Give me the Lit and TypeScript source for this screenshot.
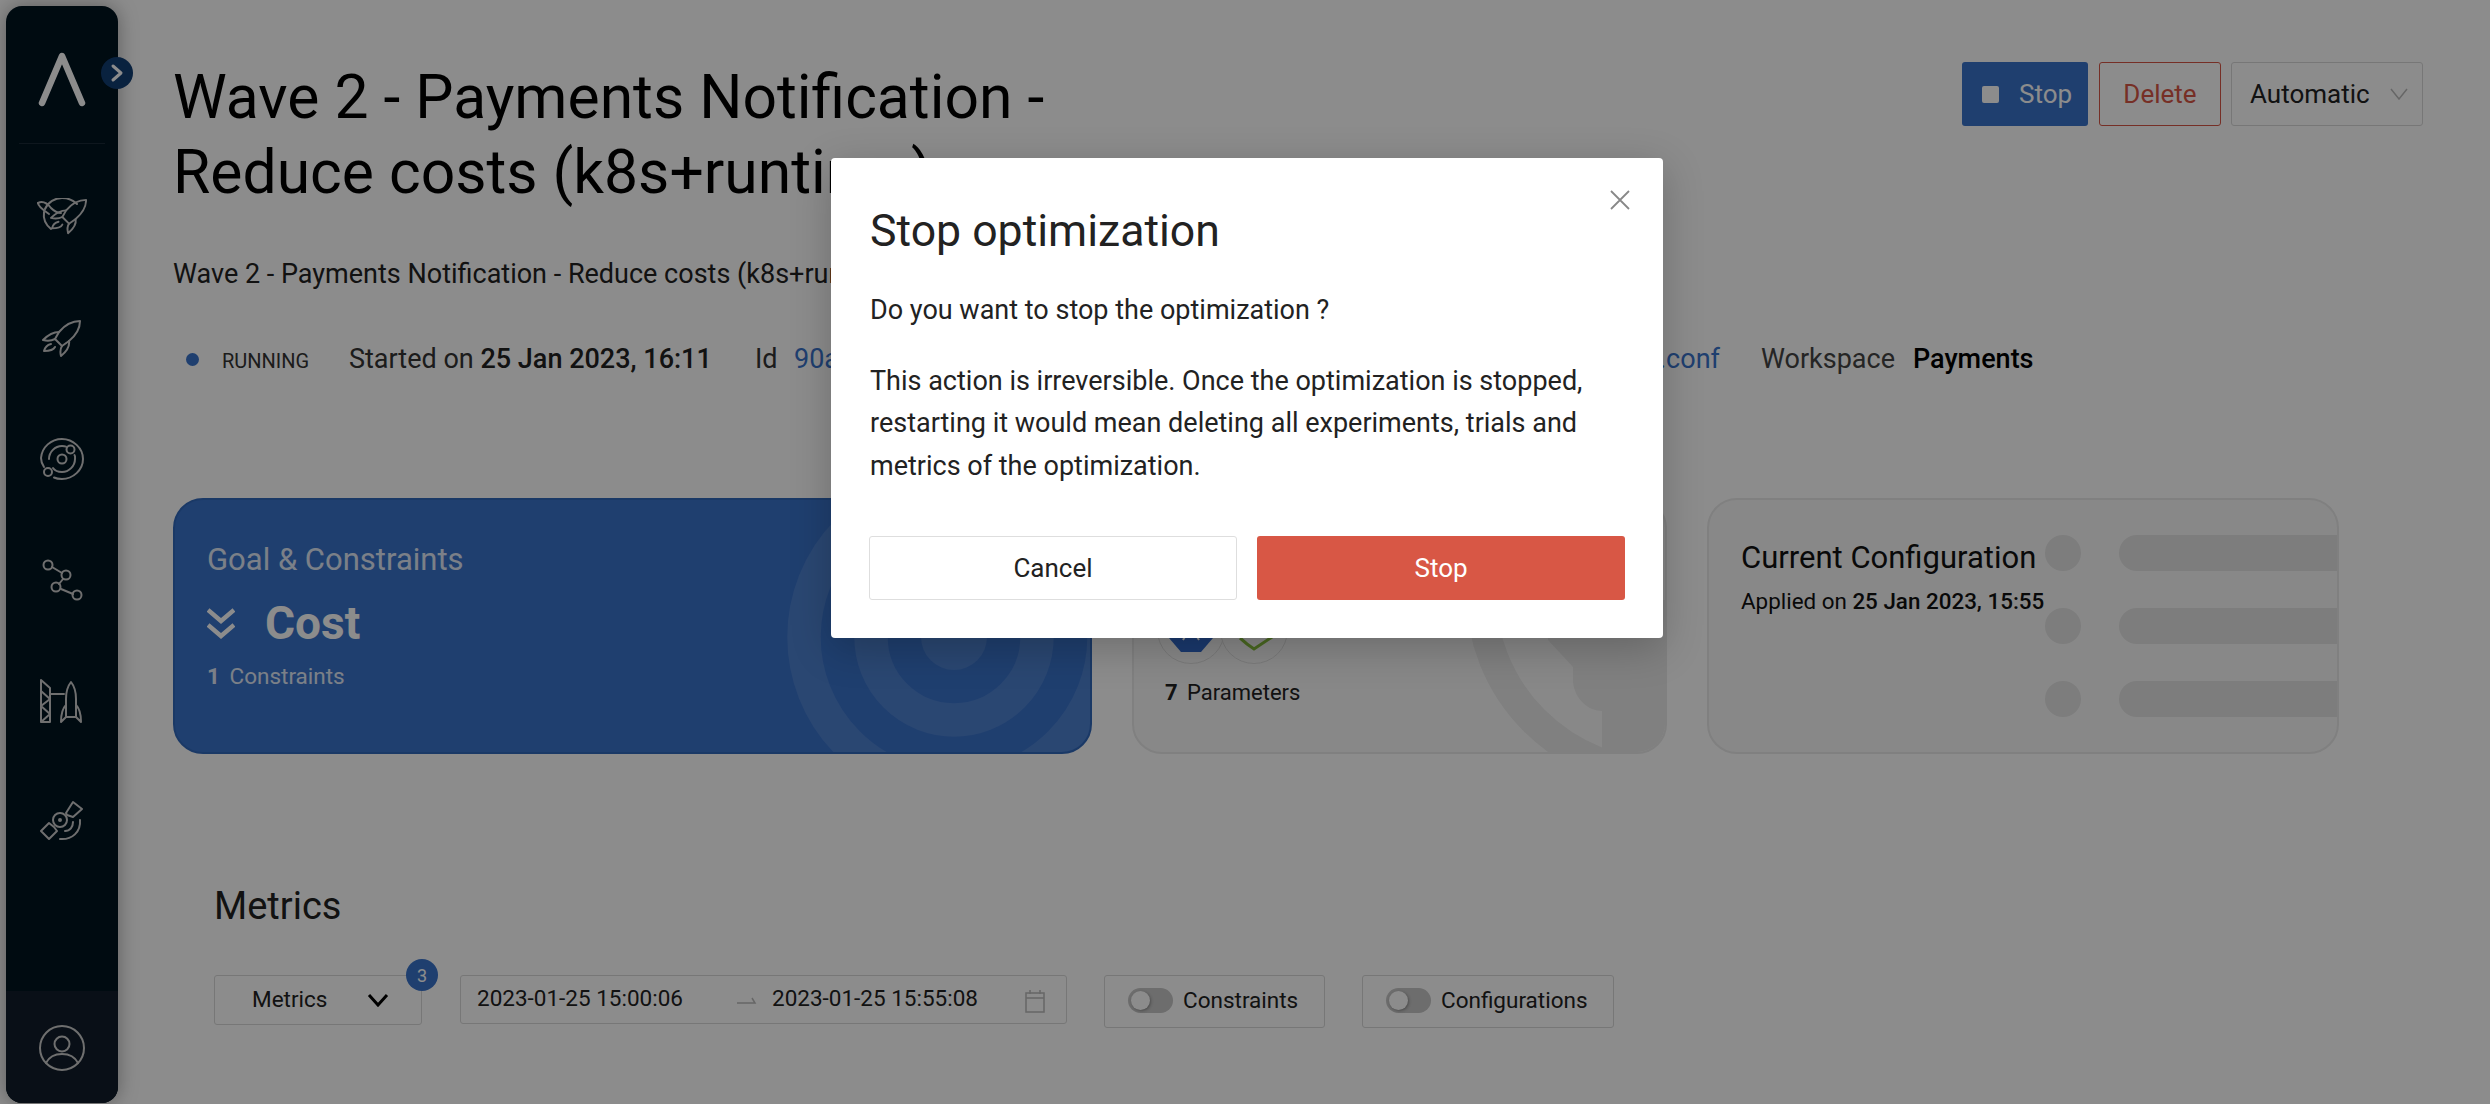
import { LitElement, html, css, svg } from "lit";
import { customElement } from "lit/decorators.js";

const rocket = svg`<path d="M38 2C30 2 22 7 17 13L13 20L20 27L27 22C33 17 38 10 38 2Z"/><path d="M17 13C10 13 5 17 1 21C5 22 9 22 13 20"/><path d="M27 22C28 28 24 33 19 37C18 33 18 30 20 27"/><path d="M9 25C5 26 3 28 2 32C6 32 11 32 13 28"/>`;

@customElement("app-root")
export class AppRoot extends LitElement {
  static styles = css`
    :host { display: block; width: 2490px; height: 1104px; overflow: hidden; position: relative; background: #fff; font-family: Roboto, "Liberation Sans", sans-serif; color: #222; }
    * { box-sizing: border-box; }
    .page { display: flex; height: 1104px; padding: 6px 0 1px 6px; }
    .side { width: 112px; flex: none; background: #001420; border-radius: 16px; display: flex; flex-direction: column; position: relative; box-shadow: 0 0 20px rgba(0,0,0,.35); }
    .logo { height: 138px; margin: 0 13px; border-bottom: 1px solid #1a2a38; display: flex; justify-content: center; padding-top: 45px; }
    .toggle { position: absolute; left: 95px; top: 51px; width: 32px; height: 32px; border-radius: 50%; background: #123e74; display: flex; align-items: center; justify-content: center; }
    .nav { flex: 1; padding-top: 12px; display: flex; flex-direction: column; }
    .item { height: 121px; display: flex; align-items: center; justify-content: center; }
    .item svg, .user svg { fill: none; stroke: #cacaca; stroke-width: 2; stroke-linecap: round; stroke-linejoin: round; }
    .user { height: 112px; background: #111d2a; border-radius: 0 0 16px 16px; display: flex; align-items: center; justify-content: center; padding-top: 2px; }

    .main { flex: 1; padding: 54px 67px 0 55px; min-width: 0; }
    .top { display: flex; justify-content: space-between; align-items: flex-start; }
    h1 { margin: 0; width: 920px; font-size: 60.6px; line-height: 75px; font-weight: 400; color: #000; }
    .actions { display: flex; margin-top: 2px; }
    .btn { height: 64px; display: flex; align-items: center; font-size: 26px; border-radius: 3px; }
    .b-stop { width: 126px; background: #3973cb; color: #fff; padding-left: 20px; gap: 20px; }
    .b-stop i { width: 17px; height: 17px; background: #fff; border-radius: 2px; display: block; }
    .b-del { width: 122px; margin-left: 11px; border: 1.5px solid #d85745; color: #d85745; justify-content: center; }
    .b-auto { width: 192px; margin-left: 10px; border: 1.5px solid #d9d9d9; color: #222; padding-left: 18px; gap: 20px; }
    .sub { margin-top: 44px; font-size: 27px; line-height: 40px; color: #222; white-space: nowrap; }
    .meta { margin-top: 45px; height: 40px; display: flex; align-items: center; font-size: 27px; color: #333; white-space: nowrap; }
    .meta b { font-weight: 500; color: #222; }
    .dot { width: 13px; height: 13px; border-radius: 50%; background: #3973cb; margin-left: 13px; }
    .run { font-size: 20px; margin-left: 23px; width: 127px; padding-top: 4px; }
    .started { width: 406px; }
    .id { width: 39px; }
    .link { color: #3973cb; }
    .link.first { width: 865px; }
    .wk { margin-left: 41px; color: #444; width: 152px; }
    .wv { font-weight: 500; color: #000; }

    .cards { margin-top: 119px; display: flex; gap: 40px; height: 256px; }
    .card { position: relative; overflow: hidden; border-radius: 30px; border: 2px solid #e9e9e9; background: #f8f8f8; height: 256px; }
    .card > .fill { position: absolute; inset: 0; }
    .c1 { width: 919px; background: #3973cb; border-color: #3168bb; color: #fff; padding: 43px 32px; }
    .c1 .t { font-size: 31px; line-height: 34px; color: #fff; opacity: .85; position: relative; font-weight: 400; }
    .goal { display: flex; align-items: center; margin-top: 19px; color: #fff; position: relative; gap: 30px; font-size: 46px; line-height: 54px; font-weight: 700; }
    .cons { margin-top: 11px; font-size: 22.5px; line-height: 30px; color: #fff; opacity: .85; position: relative; }
    .cons b { font-weight: 700; margin-right: 4px; }
    .c2 { width: 535px; padding: 96px 0 0 23px; }
    .logos { display: flex; position: relative; }
    .lg { width: 68px; height: 68px; border-radius: 50%; border: 1.5px solid #dfdfdf; background: #f8f8f8; display: flex; align-items: center; justify-content: center; }
    .lg + .lg { margin-left: -5px; }
    .params { position: relative; margin: 14px 0 0 8px; font-size: 22px; line-height: 30px; color: #222; }
    .params b { font-weight: 700; margin-right: 4px; }
    .c3 { width: 632px; padding: 39px 0 0 32px; }
    .deco { position: absolute; left: 336px; top: 35px; right: 0; display: flex; flex-direction: column; gap: 37px; }
    .deco div { display: flex; gap: 38px; }
    .deco i { width: 36px; height: 36px; border-radius: 50%; background: #e3e3e3; flex: none; }
    .deco u { flex: 1; height: 36px; border-radius: 18px 0 0 18px; background: #e3e3e3; }
    .c3 .t { position: relative; font-size: 31px; line-height: 38px; color: #111; }
    .c3 .a { position: relative; font-size: 22.4px; line-height: 30px; margin-top: 9px; color: #111; }
    .c3 .a b { font-weight: 500; }

    .metrics { padding-left: 41px; margin-top: 127px; }
    h2 { margin: 0; font-size: 38px; line-height: 50px; font-weight: 400; color: #222; }
    .ctrl { margin-top: 44px; display: flex; align-items: flex-start; }
    .box { border: 1.5px solid #d9d9d9; border-radius: 3px; display: flex; align-items: center; font-size: 22.5px; color: #222; position: relative; padding-bottom: 3px; }
    .sel { width: 208px; height: 50px; padding-left: 37px; gap: 40px; }
    .sel svg { margin-top: 3px; }
    .badge { position: absolute; right: -17px; top: -17px; width: 32px; height: 32px; border-radius: 50%; background: #3973cb; color: #fff; font-size: 18px; display: flex; align-items: center; justify-content: center; }
    .range { width: 607px; height: 49px; margin-left: 38px; padding-left: 16px; }
    .range span { width: 260px; }
    .range .arr { width: 35px; flex: none; display: flex; padding-top: 3px; }
    .range .d2 { width: 253px; margin-left: 0; }
    .range > svg { margin-top: 5px; }
    .sw { height: 53px; padding-left: 23px; gap: 10px; font-size: 22.5px; }
    .s1 { width: 221px; margin-left: 37px; }
    .s2 { width: 252px; margin-left: 37px; }
    .track { width: 45px; height: 25px; border-radius: 13px; background: #c6c6c6; position: relative; flex: none; }
    .track i { position: absolute; left: 3px; top: 3px; width: 19px; height: 19px; border-radius: 50%; background: #fff; box-shadow: 1px 1px 3px rgba(0,0,0,.3); }

    .mask { position: absolute; inset: 0; background: rgba(0,0,0,.45); }
    .wrap { position: absolute; inset: 0; display: flex; justify-content: center; padding: 158px 0 0 4px; }
    .modal { width: 832px; height: 480px; background: #fff; border-radius: 4px; box-shadow: 0 10px 40px rgba(0,0,0,.22); padding: 45px 38px 0 39px; position: relative; color: #222; }
    .close { position: absolute; right: 33px; top: 32px; }
    .modal h3 { margin: 0; font-size: 44.6px; line-height: 56px; font-weight: 400; color: #222; }
    .modal p { margin: 0; font-size: 27px; line-height: 42.5px; }
    .q { margin-top: 30px !important; }
    .d { margin-top: 28px !important; }
    .mbtns { display: flex; gap: 20px; margin: 49px 0 0 -1px; }
    .mb { flex: none; width: 368px; height: 64px; display: flex; align-items: center; justify-content: center; font-size: 26px; border-radius: 3px; }
    .cancel { border: 1.5px solid #dedede; color: #222; }
    .danger { background: #d85745; color: #fff; }
  `;

  render() {
    return html`
      <div class="page">
        <aside class="side">
          <div class="logo">
            <svg width="48" height="56" viewBox="0 0 48 56"><path d="M4 52L24 5L44 52" fill="none" stroke="#fff" stroke-width="6.500" stroke-linecap="round" stroke-linejoin="round"/></svg>
          </div>
          <div class="toggle"><svg width="14" height="20" viewBox="0 0 14 20"><path d="M3 3L11 10L3 17" fill="none" stroke="#fff" stroke-width="3" stroke-linecap="round" stroke-linejoin="round"/></svg></div>
          <nav class="nav">
            <div class="item">
              <svg width="50" height="38" viewBox="0 0 50 38"><path d="M8 11C11 4 18 0 25 0C31 0 36 2 40 6"/><path d="M7 14C6 21 9 27 14 31"/><path d="M1 5C5 3 10 5 14 10C17 13 20 15 24 15"/><path d="M1 5C1 8 6 12 12 16"/><g transform="translate(13 0) scale(.95)">${rocket}</g></svg>
            </div>
            <div class="item"><svg width="40" height="38" viewBox="0 0 40 38">${rocket}</svg></div>
            <div class="item">
              <svg width="44" height="42" viewBox="0 0 44 42"><path d="M4 29C2 26 1 23 1 20C2 9 11 1 22 1C33 1 43 10 43 21C43 32 33 41 22 41C19 41 16 40.500 14 39.500"/><path d="M9 21C9 14 15 8 22 8C23.500 8 25 8.200 26 8.600"/><path d="M34.500 17C35.500 18.500 35 20 35 21C35 28 29 34 22 34C18 34 15 33 13 30"/><circle cx="22" cy="21" r="4.500"/><circle cx="30.500" cy="11.500" r="4"/><circle cx="8" cy="34" r="4"/></svg>
            </div>
            <div class="item">
              <svg width="42" height="42" viewBox="0 0 42 42"><circle cx="7" cy="6" r="4.500"/><circle cx="25" cy="16" r="4.500"/><circle cx="15" cy="28" r="4.500"/><circle cx="36" cy="36" r="4.500"/><path d="M11 8L21 14M22 20L18 25M20 30L32 35"/></svg>
            </div>
            <div class="item">
              <svg width="44" height="44" viewBox="0 0 44 44"><path d="M1 1L10 9V43H1ZM1 12L10 20L1 27L10 35L1 43M10 15H24"/><path d="M31 3C27 8 26 14 26 20V38H36V20C36 14 35 8 31 3Z"/><path d="M26 26C22 30 21 36 21 43L26 38M36 26C40 30 41 36 41 43L36 38"/></svg>
            </div>
            <div class="item">
              <svg width="44" height="44" viewBox="0 0 44 44"><circle cx="20" cy="20" r="7"/><circle cx="20" cy="20" r="1"/><path d="M26 13L33 2L42 9L33 17L27 15ZM14 27L9 23L1 31L9 39L17 31Z"/><path d="M25 31C30 31 33 27 33 22M20 39C32 40 41 32 40 20"/></svg>
            </div>
          </nav>
          <div class="user">
            <svg width="46" height="46" viewBox="0 0 46 46"><circle cx="23" cy="23" r="22"/><circle cx="23" cy="19" r="7.500"/><path d="M7 38C10 32 16 29 23 29C30 29 36 32 39 38"/></svg>
          </div>
        </aside>

        <main class="main">
          <div class="top">
            <h1>Wave 2 - Payments Notification - Reduce costs (k8s+runtime)</h1>
            <div class="actions">
              <div class="btn b-stop"><i></i>Stop</div>
              <div class="btn b-del">Delete</div>
              <div class="btn b-auto">Automatic
                <svg width="18" height="12" viewBox="0 0 18 12"><path d="M1 1L9 11L17 1" fill="none" stroke="#bbb" stroke-width="1.500"/></svg>
              </div>
            </div>
          </div>
          <div class="sub">Wave 2 - Payments Notification - Reduce costs (k8s+runtime)</div>
          <div class="meta">
            <span class="dot"></span><span class="run">RUNNING</span>
            <span class="started">Started on <b>25 Jan 2023, 16:11</b></span>
            <span class="id">Id</span><span class="link first">90a</span>
            <span class="link">.conf</span>
            <span class="wk">Workspace</span><span class="wv">Payments</span>
          </div>

          <div class="cards">
            <section class="card c1">
              <svg class="fill" viewBox="0 0 919 256" width="919" height="256">
                <g fill="none" stroke="#fff" stroke-opacity=".1" stroke-width="33.500">
                  <circle cx="779" cy="137" r="150"/>
                  <circle cx="779" cy="137" r="83"/>
                </g>
                <circle cx="779" cy="137" r="33" fill="#fff" fill-opacity=".1"/>
              </svg>
              <div class="t">Goal &amp; Constraints</div>
              <div class="goal">
                <svg width="28" height="32" viewBox="0 0 28 32"><path d="M1 3L14 14L27 3M1 18L14 29L27 18" fill="none" stroke="#fff" stroke-width="4.500"/></svg>
                Cost
              </div>
              <div class="cons"><b>1</b> Constraints</div>
            </section>

            <section class="card c2">
              <svg class="fill" viewBox="0 0 535 256" width="535" height="256">
                <circle cx="529" cy="92" r="182" fill="none" stroke="#e9e9e9" stroke-width="30"/>
                <path d="M414 140L439 167V182C441 200 455 211 468 211V256H535V100H414Z" fill="#e9e9e9"/>
              </svg>
              <div class="logos">
                <div class="lg"><svg width="44" height="44" viewBox="0 0 44 44"><path d="M22 0L41 9L44 30L32 44H12L0 30L3 9Z" fill="#3168c8"/><path d="M14 32L17 27H27L30 32" fill="none" stroke="#fff" stroke-width="2"/></svg></div>
                <div class="lg"><svg width="44" height="44" viewBox="0 0 44 44"><path d="M2 22L8 27L40 6M8 30L15 36L22 41L43 27" fill="none" stroke="#86bd3c" stroke-width="3"/></svg></div>
              </div>
              <div class="params"><b>7</b> Parameters</div>
            </section>

            <section class="card c3">
              <div class="deco">
                <div><i></i><u></u></div>
                <div><i></i><u></u></div>
                <div><i></i><u></u></div>
              </div>
              <div class="t">Current Configuration</div>
              <div class="a">Applied on <b>25 Jan 2023, 15:55</b></div>
            </section>
          </div>

          <section class="metrics">
            <h2>Metrics</h2>
            <div class="ctrl">
              <div class="box sel">Metrics
                <svg width="22" height="14" viewBox="0 0 22 14"><path d="M2 2L11 12L20 2" fill="none" stroke="#000" stroke-width="3"/></svg>
                <div class="badge">3</div>
              </div>
              <div class="box range">
                <span>2023-01-25 15:00:06</span>
                <div class="arr"><svg width="20" height="8" viewBox="0 0 20 8"><path d="M0 7H18L15 2" fill="none" stroke="#bbb" stroke-width="1.500"/></svg></div>
                <span class="d2">2023-01-25 15:55:08</span>
                <svg width="20" height="24" viewBox="0 0 20 24"><path d="M1 4H19V23H1ZM1 9H19M5 1V5M15 1V5" fill="none" stroke="#bbb" stroke-width="1.500"/></svg>
              </div>
              <div class="box sw s1"><div class="track"><i></i></div>Constraints</div>
              <div class="box sw s2"><div class="track"><i></i></div>Configurations</div>
            </div>
          </section>
        </main>
      </div>

      <div class="mask"></div>
      <div class="wrap">
        <div class="modal">
          <svg class="close" width="20" height="20" viewBox="0 0 20 20"><path d="M1 1L19 19M19 1L1 19" fill="none" stroke="#888" stroke-width="1.800"/></svg>
          <h3>Stop optimization</h3>
          <p class="q">Do you want to stop the optimization ?</p>
          <p class="d">This action is irreversible. Once the optimization is stopped, restarting it would mean deleting all experiments, trials and metrics of the optimization.</p>
          <div class="mbtns">
            <div class="mb cancel">Cancel</div>
            <div class="mb danger">Stop</div>
          </div>
        </div>
      </div>
    `;
  }
}
